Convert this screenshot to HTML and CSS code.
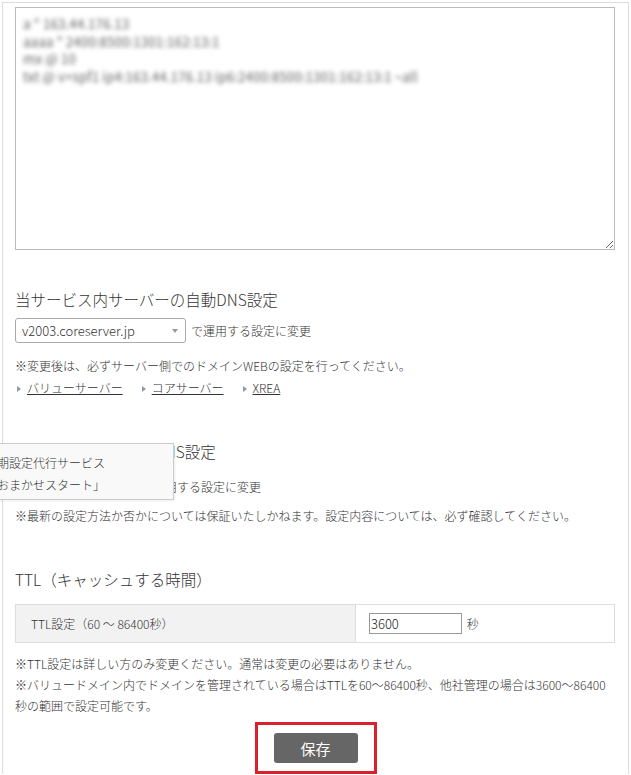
FILE: index.html
```html
<!DOCTYPE html>
<html lang="ja">
<head>
  <meta charset="UTF-8" />
  <meta name="viewport" content="width=device-width, initial-scale=1.0"/>
  <title>DNS設定</title>
  <link rel="stylesheet" href="styles.css">
</head>
<body>

  <div class="panel">

    <!-- DNSレコード -->
    <textarea class="records" spellcheck="false">a * 163.44.176.13
aaaa * 2400:8500:1301:162:13:1
mx @ 10
txt @ v=spf1 ip4:163.44.176.13 ip6:2400:8500:1301:162:13:1 ~all</textarea>

    <!-- 当サービス内 -->
    <div class="section">
      <h2>当サービス内サーバーの自動DNS設定</h2>
      <div class="row">
        <span class="select-wrap server-select">
          <select>
            <option>v2003.coreserver.jp</option>
          </select>
        </span>
        <span>で運用する設定に変更</span>
      </div>
      <p class="note">※変更後は、必ずサーバー側でのドメインWEBの設定を行ってください。</p>
      <ul class="links">
        <li><a href="#">バリューサーバー</a></li>
        <li><a href="#">コアサーバー</a></li>
        <li><a href="#">XREA</a></li>
      </ul>
    </div>

    <!-- 他社 -->
    <div class="section second">
      <h2>他社サーバーの自動DNS設定</h2>
      <div class="row">
        <span class="select-wrap other-select">
          <select>
            <option>選択してください</option>
          </select>
        </span>
        <span>で運用する設定に変更</span>
      </div>
      <p class="note">※最新の設定方法か否かについては保証いたしかねます。設定内容については、必ず確認してください。</p>
      <div class="tooltip">初期設定代行サービス<br>「おまかせスタート」</div>
    </div>

    <!-- TTL -->
    <div class="section ttl">
      <h2>TTL（キャッシュする時間）</h2>
      <table class="ttl-table">
        <tr>
          <th>TTL設定（60 ～ 86400秒）</th>
          <td><input type="text" class="ttl-input" value="3600"> 秒</td>
        </tr>
      </table>
      <p class="notes">※TTL設定は詳しい方のみ変更ください。通常は変更の必要はありません。<br>※バリュードメイン内でドメインを管理されている場合はTTLを60～86400秒、他社管理の場合は3600～86400秒の範囲で設定可能です。</p>
    </div>

    <div class="actions">
      <div class="highlight">
        <button class="save">保存</button>
      </div>
    </div>

  </div>

</body>
</html>
```

FILE: styles.css
```css
body {
  margin: 0;
  padding: 0;
  background-color: white;
  color: #333;
  font-family: "Noto Sans CJK JP", "Noto Sans", sans-serif;
  font-size: 12px;
  font-weight: 300;
}

.panel {
  margin: 2px 2px 0 2px;
  border: 1px solid #ddd;
  border-bottom: none;
  padding: 4px 12px 0 12px;
  min-height: 772px;
  box-sizing: border-box;
}

.records {
  display: block;
  width: 600px;
  height: 243px;
  box-sizing: border-box;
  margin: 0;
  padding: 7px 7px;
  border: 1px solid #bbb;
  font-family: "Noto Sans CJK JP", sans-serif;
  font-size: 13.5px;
  font-weight: 400;
  line-height: 17.5px;
  color: transparent;
  text-shadow: 0 0 4px #666;
  resize: vertical;
}

.section {
  position: relative;
  margin-top: 38px;
}

.section h2 {
  margin: 0;
  font-size: 15.5px;
  font-weight: 300;
  line-height: 22px;
  color: #333;
}

.row {
  display: flex;
  align-items: center;
  gap: 5px;
  margin-top: 8px;
}

.select-wrap {
  position: relative;
  display: block;
}

.select-wrap select {
  display: block;
  width: 100%;
  height: 25px;
  border: 1px solid #aaa;
  border-radius: 3px;
  background-color: white;
  font-family: "Noto Sans CJK JP", sans-serif;
  font-size: 13px;
  font-weight: 300;
  color: #333;
  padding: 0 6px;
  appearance: none;
  -webkit-appearance: none;
}

.select-wrap::after {
  content: "";
  position: absolute;
  right: 8px;
  top: 11px;
  border-top: 4px solid #999;
  border-left: 3px solid transparent;
  border-right: 3px solid transparent;
}

.server-select {
  width: 171px;
}

.other-select {
  width: 121px;
}

.note {
  margin: 12px 0 0 0;
  line-height: 21px;
}

.links {
  list-style: none;
  margin: 2px 0 0 0;
  padding: 0;
  display: flex;
  gap: 17px;
  line-height: 20px;
}

.links li::before {
  content: "";
  display: inline-block;
  border-left: 4px solid #8a9bb0;
  border-top: 3px solid transparent;
  border-bottom: 3px solid transparent;
  margin: 0 6px 1px 2px;
}

.links a {
  color: #333;
  text-decoration: underline;
}

.second {
  margin-top: 42px;
}

.second .row {
  margin-top: 12px;
}

.second .note {
  margin-top: 6px;
}

.tooltip {
  position: absolute;
  left: -37px;
  top: 3px;
  width: 196px;
  height: 57px;
  box-sizing: border-box;
  padding: 8px 6px;
  background-color: #f9f9f9;
  border: 1px solid #ccc;
  box-shadow: 1px 1px 2px rgba(0,0,0,0.08);
  line-height: 22px;
  font-size: 12px;
  color: #333;
}

.ttl {
  margin-top: 42px;
}

.ttl-table {
  width: 600px;
  margin-top: 14px;
  border-collapse: collapse;
  border: 1px solid #ddd;
  table-layout: fixed;
}

.ttl-table th {
  width: 324px;
  height: 37px;
  padding: 0 0 0 15px;
  text-align: left;
  font-weight: 300;
  background-color: #f2f2f2;
  border-right: 1px solid #ddd;
}

.ttl-table td {
  padding: 0 0 0 13px;
}

.ttl-input {
  width: 93px;
  height: 21px;
  box-sizing: border-box;
  border: 1px solid #999;
  padding: 0 1px;
  font-family: "Noto Sans CJK JP", sans-serif;
  font-size: 13px;
  font-weight: 300;
  color: #222;
  margin-right: 2px;
}

.notes {
  margin: 10px 0 0 0;
  line-height: 21px;
}

.actions {
  display: flex;
  justify-content: center;
  margin-top: 6px;
}

.highlight {
  border: 3px solid #d8212c;
  padding: 8px 16px;
}

.save {
  display: block;
  width: 84px;
  height: 30px;
  border: none;
  border-radius: 3px;
  background-color: #666;
  color: white;
  font-family: "Noto Sans CJK JP", sans-serif;
  font-size: 15px;
  cursor: pointer;
}
```
